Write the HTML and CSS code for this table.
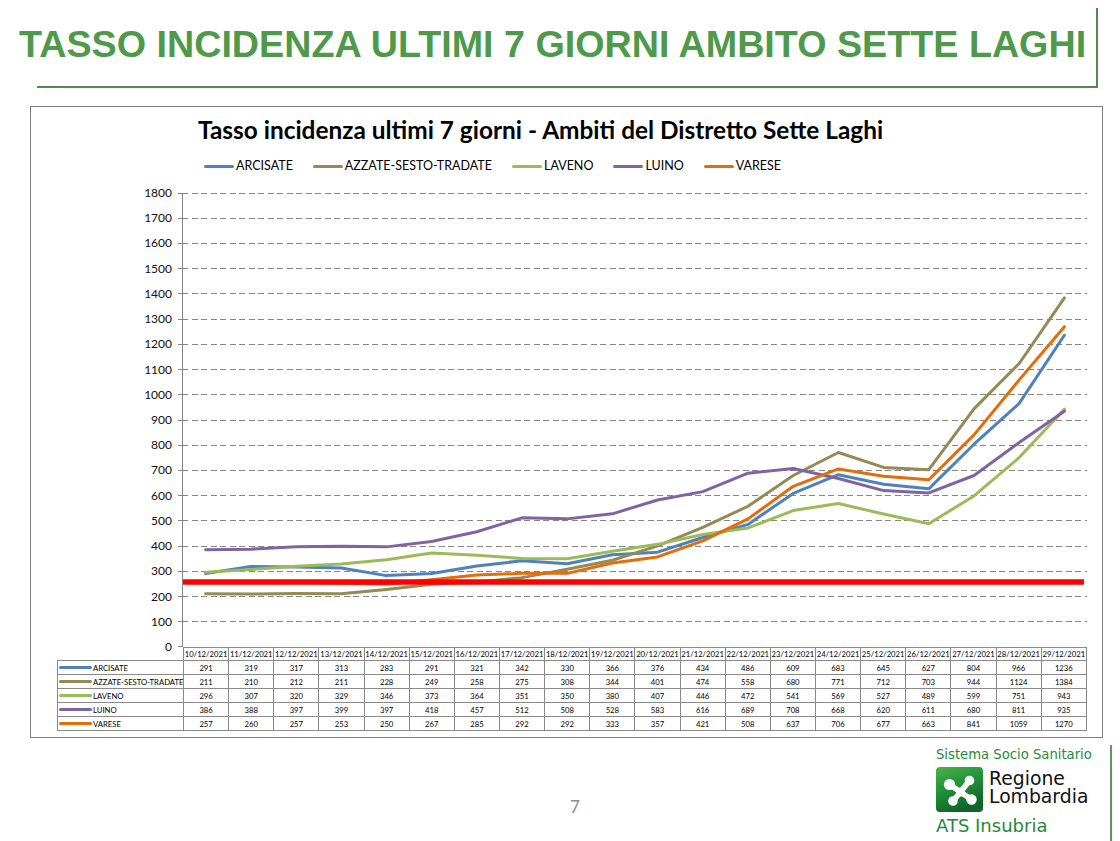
FILE: index.html
```html
<!DOCTYPE html>
<html lang="it">
<head>
<meta charset="utf-8">
<title>Tasso incidenza ultimi 7 giorni ambito Sette Laghi</title>
<link rel="stylesheet" href="styles.css">
</head>
<body>
<div class="page">
  <header class="header">
    <h1 class="title">TASSO INCIDENZA ULTIMI 7 GIORNI AMBITO SETTE LAGHI</h1>
  </header>

  <section class="chart">
    <h2 class="chart-title">Tasso incidenza ultimi 7 giorni - Ambiti del Distretto Sette Laghi</h2>
    <ul class="legend">
      <li class="legend-item"><span class="key k-arc"></span>ARCISATE</li>
      <li class="legend-item"><span class="key k-azz"></span>AZZATE-SESTO-TRADATE</li>
      <li class="legend-item"><span class="key k-lav"></span>LAVENO</li>
      <li class="legend-item"><span class="key k-lui"></span>LUINO</li>
      <li class="legend-item"><span class="key k-var"></span>VARESE</li>
    </ul>

    <svg class="plot" width="1071" height="467" viewBox="0 0 1071 467">
      <path class="grid" d="M151 13H1056M151 38.22H1056M151 63.44H1056M151 88.67H1056M151 113.89H1056M151 139.11H1056M151 164.33H1056M151 189.56H1056M151 214.78H1056M151 240H1056M151 265.22H1056M151 290.44H1056M151 315.67H1056M151 340.89H1056M151 366.11H1056M151 391.33H1056M151 416.56H1056M151 441.78H1056"/>
      <path class="ticks" d="M147 13H151M147 38.22H151M147 63.44H151M147 88.67H151M147 113.89H151M147 139.11H151M147 164.33H151M147 189.56H151M147 214.78H151M147 240H151M147 265.22H151M147 290.44H151M147 315.67H151M147 340.89H151M147 366.11H151M147 391.33H151M147 416.56H151M147 441.78H151M147 466.5H151"/>
      <path class="axis" d="M151.5 13V467"/>
      <g class="ylabels">
        <text x="141" y="17">1800</text>
        <text x="141" y="42.2">1700</text>
        <text x="141" y="67.4">1600</text>
        <text x="141" y="92.7">1500</text>
        <text x="141" y="117.9">1400</text>
        <text x="141" y="143.1">1300</text>
        <text x="141" y="168.3">1200</text>
        <text x="141" y="193.6">1100</text>
        <text x="141" y="218.8">1000</text>
        <text x="141" y="244">900</text>
        <text x="141" y="269.2">800</text>
        <text x="141" y="294.4">700</text>
        <text x="141" y="319.7">600</text>
        <text x="141" y="344.9">500</text>
        <text x="141" y="370.1">400</text>
        <text x="141" y="395.3">300</text>
        <text x="141" y="420.6">200</text>
        <text x="141" y="445.8">100</text>
        <text x="141" y="471">0</text>
      </g>
      <g class="series" transform="translate(174.6 467) scale(45.2 -0.252222)">
        <polyline class="s-arc" vector-effect="non-scaling-stroke" points="0,291 1,319 2,317 3,313 4,283 5,291 6,321 7,342 8,330 9,366 10,376 11,434 12,486 13,609 14,683 15,645 16,627 17,804 18,966 19,1236"/>
        <polyline class="s-azz" vector-effect="non-scaling-stroke" points="0,211 1,210 2,212 3,211 4,228 5,249 6,258 7,275 8,308 9,344 10,401 11,474 12,558 13,680 14,771 15,712 16,703 17,944 18,1124 19,1384"/>
        <polyline class="s-lav" vector-effect="non-scaling-stroke" points="0,296 1,307 2,320 3,329 4,346 5,373 6,364 7,351 8,350 9,380 10,407 11,446 12,472 13,541 14,569 15,527 16,489 17,599 18,751 19,943"/>
        <polyline class="s-lui" vector-effect="non-scaling-stroke" points="0,386 1,388 2,397 3,399 4,397 5,418 6,457 7,512 8,508 9,528 10,583 11,616 12,689 13,708 14,668 15,620 16,611 17,680 18,811 19,935"/>
        <polyline class="s-var" vector-effect="non-scaling-stroke" points="0,257 1,260 2,257 3,253 4,250 5,267 6,285 7,292 8,292 9,333 10,357 11,421 12,508 13,637 14,706 15,677 16,663 17,841 18,1059 19,1270"/>
      </g>
      <path class="threshold" d="M152 402H1053"/>
    </svg>

    <table class="data">
      <colgroup><col class="col-label"><col span="20"></colgroup>
      <thead>
        <tr>
          <th class="corner"></th>
          <th>10/12/2021</th><th>11/12/2021</th><th>12/12/2021</th><th>13/12/2021</th><th>14/12/2021</th>
          <th>15/12/2021</th><th>16/12/2021</th><th>17/12/2021</th><th>18/12/2021</th><th>19/12/2021</th>
          <th>20/12/2021</th><th>21/12/2021</th><th>22/12/2021</th><th>23/12/2021</th><th>24/12/2021</th>
          <th>25/12/2021</th><th>26/12/2021</th><th>27/12/2021</th><th>28/12/2021</th><th>29/12/2021</th>
        </tr>
      </thead>
      <tbody>
        <tr>
          <th class="row-label"><span class="tkey k-arc"></span>ARCISATE</th>
          <td>291</td><td>319</td><td>317</td><td>313</td><td>283</td><td>291</td><td>321</td><td>342</td><td>330</td><td>366</td>
          <td>376</td><td>434</td><td>486</td><td>609</td><td>683</td><td>645</td><td>627</td><td>804</td><td>966</td><td>1236</td>
        </tr>
        <tr>
          <th class="row-label"><span class="tkey k-azz"></span>AZZATE-SESTO-TRADATE</th>
          <td>211</td><td>210</td><td>212</td><td>211</td><td>228</td><td>249</td><td>258</td><td>275</td><td>308</td><td>344</td>
          <td>401</td><td>474</td><td>558</td><td>680</td><td>771</td><td>712</td><td>703</td><td>944</td><td>1124</td><td>1384</td>
        </tr>
        <tr>
          <th class="row-label"><span class="tkey k-lav"></span>LAVENO</th>
          <td>296</td><td>307</td><td>320</td><td>329</td><td>346</td><td>373</td><td>364</td><td>351</td><td>350</td><td>380</td>
          <td>407</td><td>446</td><td>472</td><td>541</td><td>569</td><td>527</td><td>489</td><td>599</td><td>751</td><td>943</td>
        </tr>
        <tr>
          <th class="row-label"><span class="tkey k-lui"></span>LUINO</th>
          <td>386</td><td>388</td><td>397</td><td>399</td><td>397</td><td>418</td><td>457</td><td>512</td><td>508</td><td>528</td>
          <td>583</td><td>616</td><td>689</td><td>708</td><td>668</td><td>620</td><td>611</td><td>680</td><td>811</td><td>935</td>
        </tr>
        <tr>
          <th class="row-label"><span class="tkey k-var"></span>VARESE</th>
          <td>257</td><td>260</td><td>257</td><td>253</td><td>250</td><td>267</td><td>285</td><td>292</td><td>292</td><td>333</td>
          <td>357</td><td>421</td><td>508</td><td>637</td><td>706</td><td>677</td><td>663</td><td>841</td><td>1059</td><td>1270</td>
        </tr>
      </tbody>
    </table>
  </section>

  <footer class="footer">
    <div class="pagenum">7</div>
    <div class="brand">
      <div class="brand-top">Sistema Socio Sanitario</div>
      <div class="brand-row">
        <svg class="brand-mark" width="47" height="45" viewBox="0 0 47 45">
          <defs>
            <linearGradient id="rlg" x1="0" y1="0" x2="0.4" y2="1">
              <stop offset="0" stop-color="#4db24a"/>
              <stop offset="0.5" stop-color="#22913a"/>
              <stop offset="1" stop-color="#0f6529"/>
            </linearGradient>
          </defs>
          <rect x="0" y="0" width="47" height="45" rx="4" fill="url(#rlg)"/>
          <g class="mark-rose">
            <path d="M13.5 17.5 L24.5 25 L33.5 13.5 M24.5 25 L17 34 M24.5 25 L35.5 32.5"/>
            <circle cx="13.5" cy="17.5" r="5.6"/>
            <circle cx="33.5" cy="13.5" r="4.8"/>
            <circle cx="17" cy="34" r="4.8"/>
            <circle cx="35.5" cy="32.5" r="5.2"/>
            <circle cx="24.5" cy="25" r="4.5"/>
          </g>
        </svg>
        <div class="brand-name">
          <div class="brand-line">Regione</div>
          <div class="brand-line">Lombardia</div>
        </div>
      </div>
      <div class="brand-ats">ATS Insubria</div>
    </div>
  </footer>
</div>
</body>
</html>
```

FILE: styles.css
```css
html, body {
  margin: 0;
  padding: 0;
  background: #ffffff;
  overflow: hidden;
}

.page {
  width: 1120px;
  height: 841px;
  overflow: hidden;
  display: flex;
  flex-direction: column;
  font-family: "Lato", "Liberation Sans", sans-serif;
}

/* ---------- slide header ---------- */
.header {
  margin: 8px 0 0 37px;
  width: 1059px;
  height: 78px;
  border-right: 2px solid #4f8d4a;
  border-bottom: 2px solid #4f8d4a;
  flex-shrink: 0;
}

.title {
  margin: 14px 0 0 -18px;
  font-family: "Liberation Sans", Arial, sans-serif;
  font-weight: bold;
  font-size: 37.7px;
  line-height: 44px;
  color: #4f994b;
  white-space: nowrap;
}

/* ---------- chart frame ---------- */
.chart {
  margin: 18px 0 0 30px;
  width: 1071px;
  height: 630px;
  border: 1px solid #7f7f7f;
  flex-shrink: 0;
  display: flex;
  flex-direction: column;
}

.chart-title {
  margin: 9px 0 0 167px;
  font-family: "Lato", sans-serif;
  font-weight: bold;
  font-size: 24.4px;
  line-height: 28px;
  color: #000;
  white-space: nowrap;
}

.legend {
  list-style: none;
  margin: 15px 0 0 173px;
  padding: 0;
  display: flex;
  gap: 20px;
  font-size: 12.5px;
  line-height: 14px;
  color: #000;
}

.legend-item {
  display: flex;
  align-items: center;
  white-space: nowrap;
}

.key {
  display: inline-block;
  width: 30px;
  height: 3px;
  border-radius: 2px;
  margin-right: 2px;
}

.k-arc { background: #4f81bd; }
.k-azz { background: #948a54; }
.k-lav { background: #9bbb59; }
.k-lui { background: #8064a2; }
.k-var { background: #e46c0a; }

/* ---------- plot ---------- */
.plot {
  display: block;
  margin-top: 7px;
  flex-shrink: 0;
  overflow: visible;
}

.grid {
  fill: none;
  stroke: #868686;
  stroke-width: 1;
  stroke-dasharray: 6 3.5;
  shape-rendering: crispEdges;
}

.ticks, .axis {
  fill: none;
  stroke: #868686;
  stroke-width: 1;
  shape-rendering: crispEdges;
}

.ylabels text {
  font-family: "Lato", sans-serif;
  font-size: 12px;
  fill: #111;
  text-anchor: end;
}

.series polyline {
  fill: none;
  stroke-width: 3;
  stroke-linejoin: round;
  stroke-linecap: round;
}

.s-arc { stroke: #4f81bd; }
.s-azz { stroke: #948a54; }
.s-lav { stroke: #9bbb59; }
.s-lui { stroke: #8064a2; }
.s-var { stroke: #e46c0a; }

.threshold {
  stroke: #ff0000;
  stroke-width: 5.5;
  fill: none;
}

/* ---------- data table ---------- */
.data {
  position: relative;
  margin-left: 26px;
  width: 1030px;
  border-collapse: collapse;
  table-layout: fixed;
  font-family: "Lato", sans-serif;
  font-size: 7.7px;
  color: #000;
}

.col-label { width: 126px; }

.data th,
.data td {
  border: 1px solid #8a8a8a;
  padding: 0;
  text-align: center;
  font-weight: normal;
  white-space: nowrap;
  overflow: hidden;
}

.data thead tr { height: 13px; }
.data tbody tr { height: 14px; }

.data th.corner { border: none; }

.data th.row-label {
  text-align: left;
  padding-left: 1px;
}

.tkey {
  display: inline-block;
  width: 33px;
  height: 3px;
  border-radius: 2px;
  vertical-align: middle;
  margin-right: 1px;
  position: relative;
  top: -1px;
}

/* ---------- footer ---------- */
.footer {
  display: flex;
  margin-top: 7px;
  flex-shrink: 0;
  height: 100px;
}

.pagenum {
  margin-left: 570px;
  padding-top: 52px;
  font-family: "Lato", sans-serif;
  font-size: 17px;
  line-height: 20px;
  color: #8c8c8c;
}

.brand {
  margin-left: auto;
  margin-right: 8px;
  width: 174px;
  border-right: 2px solid #5b9b56;
  padding-top: 2px;
  font-family: "DejaVu Sans", sans-serif;
}

.brand-top {
  font-size: 13.2px;
  line-height: 16px;
  color: #1e8b3c;
  white-space: nowrap;
}

.brand-row {
  display: flex;
  margin-top: 4px;
}

.brand-mark {
  display: block;
  flex-shrink: 0;
}

.mark-rose path {
  stroke: #ffffff;
  stroke-width: 5.5;
  stroke-linecap: round;
  stroke-linejoin: round;
  fill: none;
}

.mark-rose circle { fill: #ffffff; }

.brand-name {
  margin: 3px 0 0 6px;
  font-size: 18.8px;
  color: #111;
  white-space: nowrap;
}

.brand-line {
  line-height: 17px;
  height: 17px;
  overflow: visible;
}

.brand-line + .brand-line {
  margin-top: 1px;
}

.brand-ats {
  margin-top: 4px;
  font-size: 18px;
  line-height: 20px;
  color: #1e8b3c;
  white-space: nowrap;
}
```
